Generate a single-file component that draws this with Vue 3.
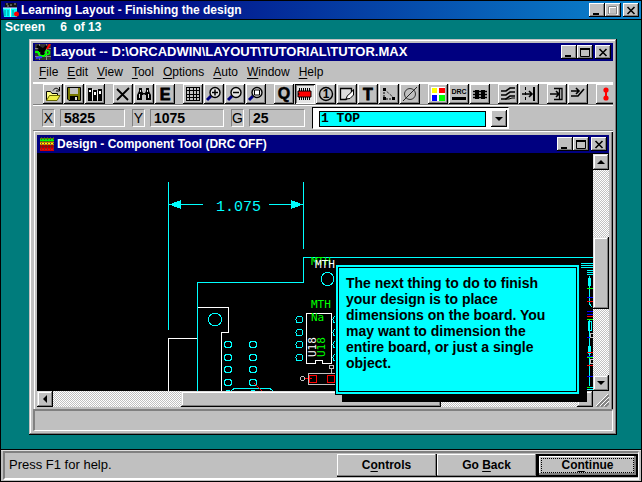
<script setup>
import { ref } from 'vue'

const layer = ref('1 TOP')
const layers = ['1 TOP', '2 BOTTOM', '3 GND', '4 POWER']

const menus = [
  ['F', 'ile'], ['E', 'dit'], ['V', 'iew'], ['T', 'ool'],
  ['O', 'ptions'], ['A', 'uto'], ['W', 'indow'], ['H', 'elp'],
]

const fields = [
  { label: 'X', value: '5825', size: 'mid' },
  { label: 'Y', value: '1075', size: 'wide' },
  { label: 'G', value: '25', size: 'slim' },
]

const glyph = (t, x, y, size, extra = '') =>
  `<text x="${x}" y="${y}" font-family="Liberation Sans, sans-serif" font-size="${size}" text-anchor="middle" ${extra}>${t}</text>`

const lens = (inner) =>
  `<path d="M5 10L1 14" stroke="#000080" stroke-width="3"/><circle cx="9" cy="6.500" r="5" fill="#e4e4e4" stroke="#000" stroke-width="1.400"/>${inner}`

const groups = [
  [
    { name: 'Open', art: '<path d="M1.500 14.500V5.500H5.500L7 7.500H12.500V9.500" fill="#ff8" stroke="#000"/><path d="M1.500 14.500L4.500 9.500H15L12 14.500Z" fill="#ee4" stroke="#660"/><path d="M8 4.500C10 1.500 12 1.500 14.500 4.500M14.500 1V5H11" stroke="#000" fill="none"/>' },
    { name: 'Save', art: '<path d="M1.500 1.500H14.500V14.500H3L1.500 13Z" fill="#770" stroke="#000"/><path d="M4 2H12V8H4Z" fill="#c0c0c0"/><path d="M4 10H12V15H4Z" fill="#000"/><path d="M9 11H11V14H9Z" fill="#ddd"/>' },
    { name: 'Library', art: '<path d="M1 2H5V15H1ZM6 4H10V15H6ZM11 3H15V15H11Z" fill="#000"/><path d="M2 4H4V6H2ZM7 6H9V9H7ZM12 5H14V8H12Z" fill="#fff"/><path d="M5.500 3V14M10.500 5V14" stroke="#eee"/>' },
  ],
  [
    { name: 'Delete', art: '<path d="M2 3L13 14M14 2L2 14" stroke="#000" stroke-width="1.800"/>' },
    { name: 'Find', art: '<path d="M3 2H6V5L7 7H9L10 5V2H13V5L15 9V14H10V9H6V14H1V9L3 5Z" fill="#000"/><path d="M4.500 4V6M3.500 8V12M11.500 4V6M12.500 8V12M7.500 8.500H8.500" stroke="#ddd"/>' },
    { name: 'Edit', art: glyph('E', 8, 14, 16, 'font-weight="bold" stroke="#000" stroke-width="0.8"') },
  ],
  [
    { name: 'Spreadsheet', art: '<path d="M1.500 1.500H14.500V14.500H1.500ZM1.500 4.500H14.500M1.500 8.500H14.500M1.500 11.500H14.500M4.500 1.500V14.500M8.500 1.500V14.500M11.500 1.500V14.500" fill="none" stroke="#000" shape-rendering="crispEdges"/>' },
    { name: 'Zoom in', art: lens('<path d="M6 6.500H12M9 3.500V9.500" stroke="#000" stroke-width="1.500"/>') },
    { name: 'Zoom out', art: lens('<path d="M6 6.500H12" stroke="#000" stroke-width="1.500"/>') },
    { name: 'Zoom all', art: lens('<path d="M6.500 4H11.500V9H6.500Z" fill="#fff" stroke="#000"/>') },
  ],
  [
    { name: 'Query', art: glyph('Q', 8, 13, 16, 'font-weight="bold" stroke="#000" stroke-width="0.5"') },
    { name: 'Component', on: true, art: '<path d="M2.500 2V14M4.500 2V14M6.500 2V14M8.500 2V14M10.500 2V14M12.500 2V14" stroke="#000" shape-rendering="crispEdges"/><path d="M1 5H14V11H1Z" fill="#f00" stroke="#000"/><path d="M1 7L3 8L1 9Z" fill="#000"/>' },
    { name: 'Pin', art: '<circle cx="8" cy="8" r="6.500" fill="none" stroke="#000" stroke-width="1.400"/>' + glyph('1', 8, 12, 12, 'font-weight="bold"') },
    { name: 'Obstacle', art: '<path d="M1.500 2.500H12.500V8L7 13.500H1.500Z" fill="#ddd" stroke="#000" stroke-width="1.300"/><path d="M7 13C8 8 12 8 14.500 3.500V9L11 12.500Z" fill="#fff" stroke="#000"/>' },
    { name: 'Text', art: glyph('T', 8, 14, 16, 'font-weight="bold" stroke="#000" stroke-width="0.8"') },
    { name: 'Connection', art: '<path d="M3 3V13H14" fill="none" stroke="#000" stroke-dasharray="2 1"/><path d="M3 3L13 12" stroke="#000" stroke-dasharray="1 1"/><path d="M2 2H5V5H2ZM2 11H5V14H2ZM11 11H14V14H11Z" fill="#000"/>' },
    { name: 'Error', art: '<circle cx="8" cy="8" r="5.500" fill="none" stroke="#333"/><path d="M1 15L15 1" stroke="#222"/>' },
  ],
  [
    { name: 'Color', art: '<path d="M1 1H15V15H1Z" fill="#fff"/><path d="M2 2H7V7H2Z" fill="#ff0"/><path d="M9 2H15V7H9Z" fill="#f00"/><path d="M2 9H7V15H2Z" fill="#00f"/><path d="M9 9H15V15H9Z" fill="#0f0"/>' },
    { name: 'Online DRC', art: glyph('DRC', 8, 8, 7, 'font-weight="bold"') + '<path d="M1 11H15V14H1Z" fill="#000"/>' },
    { name: 'Reconnect', art: '<path d="M1 5.500H15M1 8.500H15M1 11.500H15" stroke="#000" stroke-width="1.500"/><path d="M3 4H7V13H3ZM9 4H13V13H9Z" fill="#000"/>' },
  ],
  [
    { name: 'Auto path', art: '<path d="M1 5H6L10 2H15M1 9H6L10 6H15M1 13H6L10 10H15" fill="none" stroke="#000" stroke-width="1.600"/><path d="M5 13H9L12 12H15" fill="none" stroke="#000"/>' },
    { name: 'Shove track', art: '<path d="M4.500 1V15" stroke="#000" stroke-dasharray="3 2"/><path d="M1 8H11M8 5L11 8L8 11" fill="none" stroke="#000" stroke-width="1.600"/><path d="M13 1V15" stroke="#000" stroke-width="2"/>' },
  ],
  [
    { name: 'Edit segment', art: '<path d="M1 8H9M7 5L10 8L7 11" fill="none" stroke="#000" stroke-width="1.600"/><path d="M5 2.500H13V13.500H5M10.500 3V13" fill="none" stroke="#000" stroke-width="1.300"/>' },
    { name: 'Add track', art: '<path d="M1 5H8M6 2L9 5L6 8M1 10H8L14 3" fill="none" stroke="#000" stroke-width="1.600"/>' },
  ],
  [
    { name: 'Design rule check', art: '<path d="M8 4V12" stroke="#f00" stroke-width="2"/><circle cx="8" cy="4" r="2.600" fill="#f00"/><circle cx="8" cy="12" r="2.600" fill="#f00"/>' },
  ],
]

const footerPads = [344, 357, 369, 382]
const chipPads = [319, 332, 344, 357]
</script>

<template>
  <div class="app">
    <header class="caption outer">
      <svg class="logo" viewBox="0 0 16 16" aria-hidden="true">
        <path d="M2 1H14V5H2Z" fill="#111" /><path d="M3 2H5M7 3H9M11 2H13M4 4H6" stroke="#999" />
        <path d="M0 6H7V15H1ZM8 6H14V15H8Z" fill="#0ff" /><path d="M0 6H14M7.500 6V15" stroke="#eee" />
        <path d="M2 8V14M5 8V14M10 8V14" stroke="#088" /><circle cx="13.500" cy="12" r="2.500" fill="#f00" />
      </svg>
      <h1>Learning Layout - Finishing the design</h1>
      <div class="winbtns">
        <button aria-label="Minimize"><svg viewBox="0 0 10 9"><path d="M1 7H7V9H1Z" /></svg></button>
        <button aria-label="Maximize" disabled><svg viewBox="0 0 10 9"><path d="M1 1H9V8.500H1Z" fill="none" stroke="#fff" stroke-width="2" /><path d="M.5 .5H8.500V8H.5Z" fill="none" stroke="#808080" /></svg></button>
        <button class="close" aria-label="Close"><svg viewBox="0 0 10 9"><path d="M1.500 1L8.500 8M8.500 1L1.500 8" stroke="#000" stroke-width="1.600" /></svg></button>
      </div>
    </header>

    <main class="desk">
      <p class="step">Screen <span>6</span> of 13</p>

      <section class="window">
        <header class="caption">
          <svg class="logo" viewBox="0 0 16 16" aria-hidden="true">
            <path d="M0 0H16V16H0Z" fill="#333" /><path d="M0 4.500H16M0 12.500H16M4.500 0V16M11.500 0V16" stroke="#888" />
            <path d="M2 2L8 6L12 2M3 7L9 5L7 9L10 12" stroke="#000" stroke-width="3" fill="none" /><path d="M0 8H3L5 12H9L11 10" stroke="#0f0" stroke-width="2" fill="none" />
            <circle cx="12.500" cy="8.500" r="2" fill="none" stroke="#0f0" stroke-width="1.500" /><path d="M15 0L12 5" stroke="#f00" stroke-width="2" /><path d="M1 14L7 13" stroke="#33f" stroke-width="2" />
          </svg>
          <h2 class="path">Layout -- D:\ORCADWIN\LAYOUT\TUTORIAL\TUTOR.MAX</h2>
          <div class="winbtns">
            <button aria-label="Minimize"><svg viewBox="0 0 10 9"><path d="M1 7H7V9H1Z" /></svg></button>
            <button aria-label="Maximize"><svg viewBox="0 0 10 9"><path d="M.5 1H9.500V8.500H.5Z" fill="none" stroke="#000" /><path d="M0 0H10V2H0Z" /></svg></button>
            <button class="close" aria-label="Close"><svg viewBox="0 0 10 9"><path d="M1.500 1L8.500 8M8.500 1L1.500 8" stroke="#000" stroke-width="1.600" /></svg></button>
          </div>
        </header>

        <nav class="menu">
          <button v-for="m in menus" :key="m[1]"><u>{{ m[0] }}</u>{{ m[1] }}</button>
        </nav>

        <div class="toolbar">
          <div v-for="(g, i) in groups" :key="i" class="group">
            <button v-for="t in g" :key="t.name" :class="{ on: t.on }" :aria-label="t.name">
              <svg viewBox="0 0 16 16" v-html="t.art"></svg>
            </button>
          </div>
        </div>

        <div class="info">
          <template v-for="f in fields" :key="f.label">
            <label :for="'pos' + f.label">{{ f.label }}</label>
            <input :id="'pos' + f.label" :class="f.size" :value="f.value" readonly>
          </template>
          <div class="combo">
            <select v-model="layer" aria-label="Layer">
              <option v-for="l in layers" :key="l" :value="l">{{ l }}</option>
            </select>
            <span class="drop"><i class="tri down"></i></span>
          </div>
        </div>

        <section class="child">
          <header class="caption">
            <svg class="logo" viewBox="0 0 16 16" aria-hidden="true">
              <path d="M1 2H15V15H1Z" fill="#a00" /><path d="M1 4H15" stroke="#0f0" stroke-width="3" /><path d="M1 7.500H15" stroke="#ff0" stroke-width="2" /><path d="M1 13.500H15" stroke="#f00" stroke-width="2" />
              <path d="M2.500 1V15M5.500 1V15M8.500 1V15M11.500 1V15M14.500 1V15" stroke="#444" stroke-dasharray="1 1" />
            </svg>
            <h2>Design - Component Tool (DRC OFF)</h2>
            <div class="winbtns">
              <button aria-label="Minimize"><svg viewBox="0 0 10 9"><path d="M1 7H7V9H1Z" /></svg></button>
              <button aria-label="Maximize"><svg viewBox="0 0 10 9"><path d="M.5 1H9.500V8.500H.5Z" fill="none" stroke="#000" /><path d="M0 0H10V2H0Z" /></svg></button>
              <button class="close" aria-label="Close"><svg viewBox="0 0 10 9"><path d="M1.500 1L8.500 8M8.500 1L1.500 8" stroke="#000" stroke-width="1.600" /></svg></button>
            </div>
          </header>

          <div class="view">
            <svg class="board">
              <g transform="translate(-37 -154)" fill="none" shape-rendering="crispEdges">
                <g stroke="#0ff">
                  <path d="M168.500 182V330M303.500 182V249M181 204.500H203M269 204.500H291" />
                  <path d="M169 204.500L181 200V209ZM303 204.500L291 200V209Z" fill="#0ff" stroke="none" />
                  <path d="M593 257.500H303.500V282.500H197.500V391" />
                  <circle cx="327.500" cy="279" r="6.500" />
                  <circle cx="215" cy="319.500" r="6.500" />
                  <template v-for="y in footerPads" :key="y">
                    <circle cx="228" :cy="y + .5" r="3.500" /><circle cx="253" :cy="y + .5" r="3.500" />
                  </template>
                  <template v-for="y in chipPads" :key="y">
                    <circle cx="299.500" :cy="y + .5" r="3.500" /><circle cx="336.500" :cy="y + .5" r="3.500" />
                  </template>
                  <path d="M231 391L234 388.500H270L273 391M226 390.500H230M251 390.500H255" />
                  <path d="M581 263.500H593M581 265.500H593M581 267.500H593M587 270.500H593M587 272.500H593M587 274.500H593" />
                  <path d="M589.500 276V304L592 307M589.500 320V386M587 387.500H593M587 389.500H593" />
                  <path d="M588 278H591V286H588ZM588 346H591V354H588Z" fill="#0ff" stroke="none" />
                  <path d="M588.500 321.500H591.500V330.500H588.500Z" />
                </g>
                <path d="M587 288.500H593M587 319.500H593M587 357.500H593M587 387.500H590" stroke="#0f0" />
                <path d="M587 297.500H593M587 311.500H593M587 314.500H593M587 337.500H593M587 356.500H593M587 376.500H593" stroke="#00f" />
                <path d="M587 301.500H593M587 316.500H593M587 352.500H593M587 365.500H593M254 383L262 391M304 378.500H312M309.500 375.500H316.500V382.500H309.500ZM327.500 375.500H334.500V382.500H327.500Z" stroke="#f00" />
                <path d="M168.500 391V338.500H197M198 307.500H228.500V332.500H221.500V391M306.500 313.500H331.500V363.500H322.500V360.500H315.500V363.500H306.500Z" stroke="#fff" />
                <path d="M336 373.500H308.500V384.500H336M329.500 365.500H333.500V368.500H329.500ZM331.500 369V373M593 333.500H590.500V337.500H593M593 359.500H590.500V363.500H593" stroke="#c0c0c0" />
                <circle cx="302.500" cy="378.500" r="2" stroke="#c0c0c0" />
              </g>
              <g transform="translate(-37 -154)" class="cad">
                <text class="dim" x="216" y="211">1.075</text>
                <text class="green" x="311" y="265">MTH</text>
                <text class="white" x="315" y="268">MTH</text>
                <text class="green" x="311" y="308">MTH</text>
                <text class="green" x="311" y="321">Na</text>
                <text class="white" transform="translate(316 357) rotate(-90)">U18</text>
                <text class="green" transform="translate(325 357) rotate(-90)">U18</text>
              </g>
            </svg>

            <div class="scroll vert">
              <button aria-label="Scroll up"><i class="tri up"></i></button>
              <span class="before"></span><span class="thumb"></span><span class="after"></span>
              <button aria-label="Scroll down"><i class="tri down"></i></button>
            </div>
            <div class="scroll horz">
              <button aria-label="Scroll left"><i class="tri left"></i></button>
              <span class="before"></span><span class="thumb"></span><span class="after"></span>
              <button aria-label="Scroll right"></button>
            </div>
            <svg class="grip" viewBox="0 0 16 16" aria-hidden="true">
              <path d="M4 16L16 4M8 16L16 8M12 16L16 12" stroke="#808080" stroke-width="2" />
              <path d="M3 15L15 3M7 15L16 6M11 15L16 10" stroke="#fff" />
            </svg>

            <aside class="tip">
              <p>The next thing to do to finish your design is to place dimensions on the board. You may want to dimension the entire board, or just a single object.</p>
            </aside>
          </div>
        </section>

        <div class="pane"></div>
      </section>
    </main>

    <footer class="status">
      <div class="well">
        <p>Press F1 for help.</p>
        <button>C<u>o</u>ntrols</button>
        <button>Go <u>B</u>ack</button>
        <button class="default"><span>Co<u>n</u>tinue</span></button>
      </div>
    </footer>
  </div>
</template>

<style>
body { margin: 0; background: #007c7c; }
</style>

<style scoped>
* { box-sizing: border-box; }
.app {
  display: flex; flex-direction: column; min-height: 100vh;
  border: 1px solid #000; background: #007c7c; color: #000;
  font: 12px/16px "Liberation Sans", Arial, sans-serif;
}
h1, h2, p { margin: 0; font-size: 12px; }
button { padding: 0; border: 0; background: #c0c0c0; color: #000; font: inherit; }
u { text-underline-offset: 2px; text-decoration-thickness: 1px; }

.caption {
  display: flex; align-items: center; flex: none; height: 18px; padding: 0 2px;
  background: #000080; color: #fff;
}
.caption h1, .caption h2 { flex: 1; margin-left: 2px; white-space: nowrap; line-height: 18px; }
.caption .path { font-size: 13px; }
.caption.outer { height: 19px; border-bottom: 1px solid #000; background: linear-gradient(90deg, #000080 15%, #0a84cc); }
.logo { width: 16px; height: 16px; }
.winbtns { display: flex; }
.winbtns button {
  display: grid; place-items: center; width: 16px; height: 14px;
  box-shadow: inset -1px -1px #000, inset 1px 1px #fff, inset -2px -2px #808080;
}
.winbtns .close { margin-left: 2px; }
.winbtns svg { width: 10px; height: 9px; }

.desk { flex: 1; display: flex; flex-direction: column; padding: 0 24px 14px 28px; }
.step { height: 19px; margin-left: -24px; color: #fff; font-weight: bold; line-height: 14px; }
.step span { margin: 0 3px 0 12px; }

.window {
  flex: 1; display: flex; flex-direction: column; padding: 4px; background: #c0c0c0;
  box-shadow: inset -1px -1px #000, inset 1px 1px #c0c0c0, inset -2px -2px #808080, inset 2px 2px #fff;
}
.menu { display: flex; gap: 9px; height: 21px; padding-left: 6px; }
.menu button { line-height: 20px; }

.toolbar {
  display: flex; gap: 7px; height: 23px; padding-left: 10px; overflow: hidden;
  border-top: 2px solid #fff; border-bottom: 1px solid #808080;
}
.group { display: flex; gap: 1px; padding-right: 1px; flex: none; }
.toolbar button {
  display: grid; place-items: center; width: 20px; height: 20px;
  box-shadow: inset -1px -1px #000, inset 1px 1px #fff, inset -2px -2px #808080;
}
.toolbar button.on { background: #e4e4e4; box-shadow: inset 1px 1px #000, inset -1px -1px #fff, inset 2px 2px #808080; }
.toolbar svg { width: 16px; height: 16px; overflow: visible; }

.info {
  display: flex; align-items: center; flex: none; height: 26px; padding-left: 9px;
  border-top: 1px solid #fff; border-bottom: 1px solid #808080;
}
.info label, .info input {
  height: 18px; border: 1px solid; border-color: #808080 #fff #fff #808080;
  background: #c0c0c0; color: #000; line-height: 16px; border-radius: 0;
}
.info label { width: 13px; margin-right: 5px; font-size: 14px; text-align: center; }
.info input { margin-right: 7px; padding: 0 0 0 3px; font: bold 14px/16px "Liberation Sans", sans-serif; }
.mid { width: 65px; }
.wide { width: 74px; }
.slim { width: 56px; }
.combo {
  display: flex; width: 197px; height: 22px; padding: 2px 1px 1px 6px; background: #fff;
  border: 1px solid; border-color: #000 #fff #fff #000;
}
.combo select {
  flex: 1; min-width: 0; height: 16px; margin: 1px 5px 0 0; padding: 0 0 0 1px; appearance: none;
  border: 1px solid #000; border-radius: 0; background: #0ff; color: #000;
  font: bold 13px/14px "Liberation Mono", monospace;
}
.drop {
  display: grid; place-items: center; width: 16px; background: #c0c0c0; pointer-events: none;
  box-shadow: inset -1px -1px #000, inset 1px 1px #fff, inset -2px -2px #808080;
}
.tri { display: block; border: 4px solid transparent; }
.tri.down { border-top-color: #000; border-bottom: 0; }
.tri.up { border-bottom-color: #000; border-top: 0; }
.tri.left { border-right-color: #000; border-left: 0; }

.child {
  flex: 1; display: flex; flex-direction: column; padding: 3px 4px 2px 3px; margin-left: 1px;
  border-top: 1px solid #fff; border-left: 1px solid #fff; box-shadow: inset -1px 0 #000, inset -2px 0 #808080;
}
.child .caption { margin-left: -1px; }
.view {
  position: relative; flex: 1; display: grid; margin-left: -1px; border-top: 1px solid #000;
  grid-template: minmax(236px, 1fr) 16px / 1fr 16px;
}
.board { width: 100%; height: 100%; background: #000; }
.cad text { font: 11px "DejaVu Sans Mono", monospace; }
.cad .dim { font: 15px "Liberation Mono", monospace; fill: #0ff; }
.cad .green { fill: #0f0; }
.cad .white { fill: #fff; }
.scroll { display: flex; background: repeating-conic-gradient(#fff 0 25%, #c0c0c0 0 50%) 0 0 / 2px 2px; }
.scroll button, .thumb {
  background: #c0c0c0;
  box-shadow: inset -1px -1px #000, inset 1px 1px #dfdfdf, inset -2px -2px #808080, inset 2px 2px #fff;
}
.scroll button { display: grid; place-items: center; flex: none; width: 16px; height: 16px; }
.vert { flex-direction: column; }
.vert .before { flex: 67; }
.vert .thumb { flex: 72; }
.vert .after { flex: 66; }
.horz .before { flex: 128; }
.horz .thumb { flex: 260; }
.horz .after { flex: 136; }
.grip { width: 16px; height: 16px; }

.tip {
  position: absolute; left: 298px; top: 110px; width: 245px; height: 131px; padding: 2px;
  background: #0ff; border: 1px solid #000; box-shadow: 7px 7px #000;
}
.tip p {
  height: 100%; padding: 7px 16px 0 7px; border: 1px solid #000;
  font: bold 14px/16px "Liberation Sans", sans-serif;
}
.pane { height: 22px; border: 1px solid; border-width: 2px 1px 1px 2px; border-color: #808080 #fff #fff #808080; }

.status { padding: 1px 2px; background: #c0c0c0; border-top: 1px solid #000; box-shadow: inset 0 1px #dfdfdf; }
.well {
  display: flex; height: 29px; padding: 1px 0; border: 1px solid;
  border-width: 2px 1px 2px 2px; border-color: #808080 #fff #fff #808080;
}
.well p { flex: 1; padding-left: 4px; font-size: 13px; line-height: 22px; }
.well button {
  width: 100px; height: 23px; font-weight: bold; border: solid #000; border-width: 0 1px 1px 0;
  box-shadow: inset -1px -1px #808080, inset 1px 1px #fff;
}
.well .default { width: 101px; border: 2px solid #000; padding: 1px; box-shadow: inset -2px -2px #808080, inset 1px 1px #fff; }
.default span { display: block; height: 15px; margin: 0 1px; border: 1px dotted #000; line-height: 13px; }
</style>
